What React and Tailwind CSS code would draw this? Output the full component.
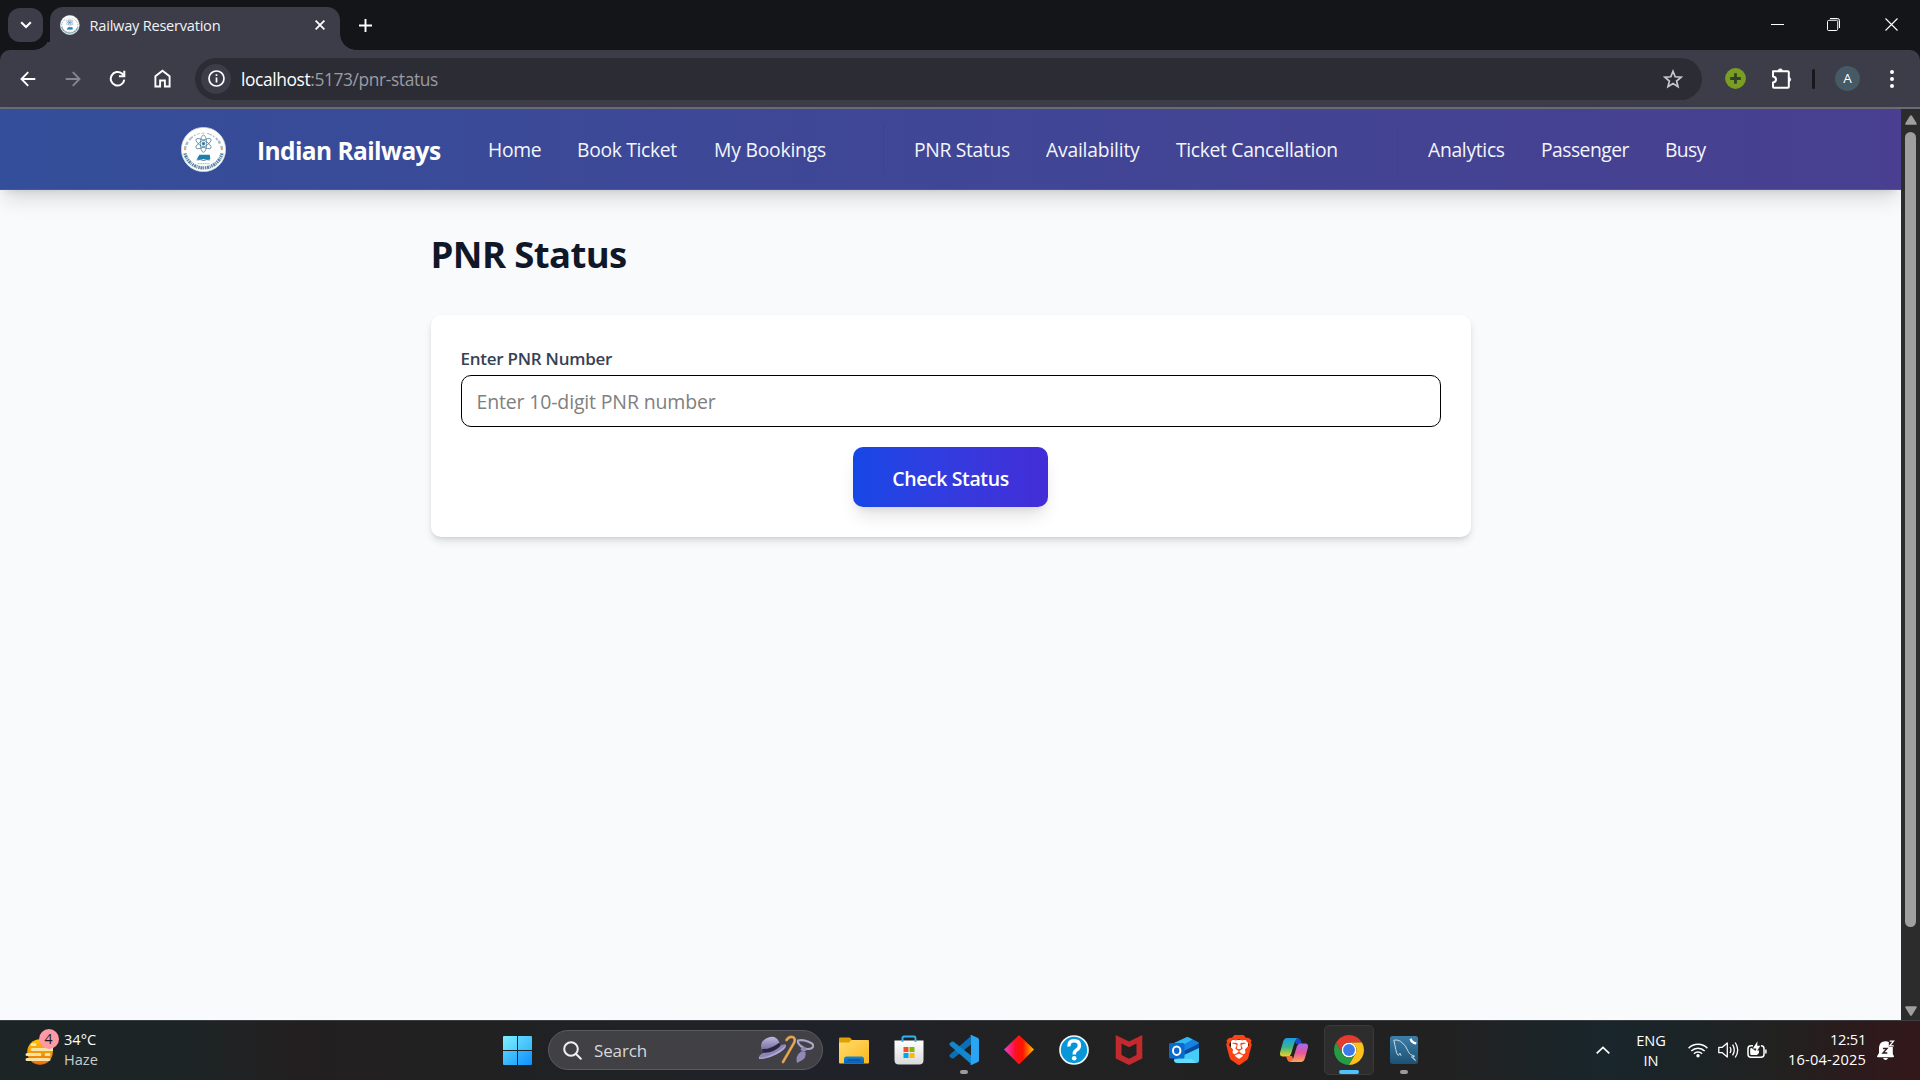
import React from "react";
import { SiBrave } from "react-icons/si";

const NAV = [
  [
    { label: "Home", box: "w-[54px]", tracking: "tracking-[-0.300px]" },
    { label: "Book Ticket", box: "w-[102px]", tracking: "tracking-[-0.320px]" },
    { label: "My Bookings", box: "w-[114px]", tracking: "tracking-[-0.200px]" },
  ],
  [
    { label: "PNR Status", box: "w-[97px]", tracking: "tracking-[-0.320px]" },
    { label: "Availability", box: "w-[95px]", tracking: "tracking-[-0.200px]" },
    { label: "Ticket Cancellation", box: "w-[166px]", tracking: "tracking-[-0.320px]" },
  ],
  [
    { label: "Analytics", box: "w-[78px]", tracking: "tracking-[-0.300px]" },
    { label: "Passenger", box: "w-[89px]", tracking: "tracking-[-0.520px]" },
    { label: "Busy", box: "w-[42px]", tracking: "tracking-[-0.650px]" },
  ],
];

function Crest({ className }) {
  return (
    <svg viewBox="0 0 46 46" className={className} fill="none">
      <circle cx="23" cy="23" r="22.6" fill="#fdfefe" stroke="#d3d8cf" strokeWidth="0.8" />
      <path d="M4 22a19.600 19.600 0 0 1 38 0" stroke="#6f8fa5" strokeWidth="2.600" strokeDasharray="2.600 1.200 3.500 2.400 5 1.400 1.600 1.800" opacity="0.600" />
      <path d="M4 27a19.600 19.600 0 0 0 38 0" stroke="#3f7397" strokeWidth="3.400" strokeDasharray="1.500 0.700 2.200 0.600 1 0.800" opacity="0.850" />
      <circle cx="23" cy="23" r="16.400" fill="#fff" />
      <g stroke="#3d7394" strokeWidth="0.700">
        <ellipse cx="23" cy="17" rx="3.200" ry="8.800" />
        <ellipse cx="23" cy="17" rx="3.200" ry="8.800" transform="rotate(60 23 17)" />
        <ellipse cx="23" cy="17" rx="3.200" ry="8.800" transform="rotate(-60 23 17)" />
        <circle cx="23" cy="17" r="1.400" fill="#3d7394" />
      </g>
      <path d="M18.800 28.300h10.600l.6 4.500H16.300z" fill="#1d7fb0" />
      <path d="M16 33.600q4-.8 7 .500 3-1.300 6.600-.5" stroke="#1f4f75" strokeWidth="0.900" />
      <path d="M17 37.500h12" stroke="#8ea6b5" strokeWidth="0.900" strokeDasharray="1.200 .6" />
      <circle cx="4.200" cy="22.600" r="1.200" fill="#f2a255" />
      <circle cx="41.800" cy="22.600" r="1.200" fill="#f2a255" />
    </svg>
  );
}

function TabStrip() {
  return (
    <div className="flex h-[50px] bg-[#141519]">
      <div className="flex h-[50px] w-[50px] shrink-0 flex-col">
        <div className="mt-2 ml-2 flex h-[34px] w-[35px] items-center justify-center rounded-[12px] bg-[#3c3d49]">
          <svg viewBox="0 0 12 8" className="h-2 w-3" fill="none" stroke="#fff" strokeWidth="2.100">
            <path d="M1.200 1.200 6 6l4.800-4.800" />
          </svg>
        </div>
        <div className="ml-auto h-2 w-4 shrink-0 bg-[radial-gradient(circle_at_0_-8px,transparent_15.5px,#3c3d49_16px)]" />
      </div>
      <div className="mt-[7px] flex h-[43px] w-[290px] shrink-0 items-center rounded-t-[13px] bg-[#3c3d49] pb-[7px] pl-[10px]">
        <Crest className="size-5" />
        <span className="ml-[10px] w-[230px] text-[14.600px] leading-5 tracking-[-0.240px] text-[#f2f2f5]">Railway Reservation</span>
        <svg viewBox="0 0 10 10" className="mr-[15px] size-[10px] shrink-0" stroke="#fff" strokeWidth="1.800">
          <path d="m.6.6 8.800 8.800M9.400.6.6 9.400" />
        </svg>
      </div>
      <div className="mt-auto h-4 w-4 shrink-0 bg-[radial-gradient(circle_at_100%_0,transparent_15.5px,#3c3d49_16px)]" />
      <svg viewBox="0 0 13 13" className="mt-[19px] ml-[3px] size-[13px] shrink-0" stroke="#fff" strokeWidth="1.900">
        <path d="M6.500 0v13M0 6.500h13" />
      </svg>
      <div className="ml-auto flex items-center pr-[22px] pb-[1px]">
        <div className="h-px w-[13px] bg-white" />
        <svg viewBox="0 0 13 13" className="ml-[43px] size-[13px]" fill="none" stroke="#fff" strokeWidth="1">
          <rect x=".5" y="2.500" width="10" height="10" rx="1" />
          <path d="M3 .5h7.500a2 2 0 0 1 2 2V10" />
          <path d="M2 2h9v9" stroke="#8d8d92" />
        </svg>
        <svg viewBox="0 0 13 13" className="ml-[45px] size-[13px]" stroke="#fff" strokeWidth="1.100">
          <path d="m.5.5 12 12M12.500.5l-12 12" />
        </svg>
      </div>
    </div>
  );
}

function Toolbar() {
  return (
    <div className="bg-[#141519]">
      <div className="flex h-[57px] items-center rounded-t-[10px] bg-[#3c3d49] pl-5">
        <svg viewBox="0 0 16 16" className="size-4" fill="none" stroke="#fff" strokeWidth="1.900">
          <path d="M15.300 8H1.800M8.200 1.200 1.500 8l6.700 6.800" />
        </svg>
        <svg viewBox="0 0 16 16" className="ml-[29px] size-4" fill="none" stroke="#85868f" strokeWidth="1.900">
          <path d="M.7 8h13.500M7.800 1.200 14.500 8l-6.700 6.800" />
        </svg>
        <svg viewBox="0 0 17 17" className="ml-[28px] size-[17px]" fill="none" stroke="#fff" strokeWidth="2">
          <path d="M15.300 9.600A6.800 6.800 0 1 1 13 3.600l2 1.900" />
          <path d="M15.300.8v5.400H9.900" />
        </svg>
        <svg viewBox="0 0 17 19" className="ml-[28px] h-[19px] w-[17px]" fill="none" stroke="#fff" strokeWidth="1.900">
          <path d="M1.400 17.500V7.300l7.100-5.600 7.100 5.600v10.200h-4.700v-6H6.100v6z" />
        </svg>
        <div className="ml-[24px] flex h-[42px] w-[1507px] items-center rounded-full bg-[#2c2c34] pl-[6px] pr-[19px]">
          <div className="flex size-[30px] items-center justify-center rounded-full bg-[#3c3d49]">
            <svg viewBox="0 0 17 17" className="size-[17px]" fill="none" stroke="#fff" strokeWidth="1.700">
              <circle cx="8.500" cy="8.500" r="7.500" />
              <path d="M8.500 7.500v5M8.500 4.200v1.900" />
            </svg>
          </div>
          <div className="ml-[10px] pt-px text-[17.400px] leading-6 text-[#9a9ba3]">
            <span className="tracking-[-0.400px] text-white">localhost</span>
            <span className="tracking-[-0.400px]">:5173/pnr-status</span>
          </div>
          <svg viewBox="0 0 20 20" className="ml-auto size-5" fill="none" stroke="#c8c8ce" strokeWidth="1.700">
            <path d="m10 2.300 2.200 5.500 5.900.4-4.500 3.800 1.400 5.700-5-3.100-5 3.100L6.400 12 1.900 8.200l5.900-.4z" />
          </svg>
        </div>
        <svg viewBox="0 0 21 21" className="ml-[23px] size-[21px]">
          <circle cx="10.500" cy="10.500" r="10.400" fill="#7a9e22" />
          <path d="M10.500 5.200v10.600M5.200 10.500h10.600" stroke="#33402a" strokeWidth="2.800" />
        </svg>
        <svg viewBox="0 0 21 21" className="ml-[25px] size-[21px]" fill="none" stroke="#fff" strokeWidth="2" strokeLinejoin="round">
          <path d="M2 3.200h14.800q1 0 1 1v14.600q0 1-1 1H3q-1 0-1-1v-4.200q3-.5 3-3t-3-3z" />
          <path d="M7 3a2.300 2.300 0 0 1 4.600 0zM18 9.300a2.300 2.300 0 0 1 0 4.500z" fill="#fff" strokeWidth="0.500" />
        </svg>
        <div className="ml-[20px] h-5 w-[3px] rounded-full bg-[#17181c]" />
        <div className="ml-[20px] flex size-[25px] items-center justify-center rounded-full bg-[#455a64] text-[13.500px] text-white">A</div>
        <div className="ml-[30px] flex flex-col gap-[3px]">
          <div className="size-1 rounded-full bg-white" />
          <div className="size-1 rounded-full bg-white" />
          <div className="size-1 rounded-full bg-white" />
        </div>
      </div>
      <div className="h-[2px] bg-[#6a6b74]" />
    </div>
  );
}

function Header() {
  return (
    <header className="flex h-[81px] items-center border-b border-[#5250a5] bg-linear-to-r from-[#334e9a] via-[#404696] to-[#483f90] pl-[181px] text-[#f4f5fb] shadow-[0_12px_20px_-4px_rgba(0,0,0,0.14),0_5px_8px_-5px_rgba(0,0,0,0.12)]">
      <Crest className="size-[45px]" />
      <span className="ml-[31px] w-[231px] pt-1 text-[24.500px] leading-[30px] font-bold tracking-[-0.580px] whitespace-nowrap text-white">Indian Railways</span>
      <nav className="flex items-center">
        {NAV.map((group, g) => (
          <div key={g} className={g === 0 ? "flex items-center gap-[35px]" : "ml-[55px] flex h-[50px] items-center gap-[35px] border-l border-[#4530d0] pl-[30px]"}>
            {group.map((item) => (
              <a key={item.label} className={`${item.box} ${item.tracking} pt-[2px] text-[19.300px] leading-[30px] font-medium whitespace-nowrap`}>{item.label}</a>
            ))}
          </div>
        ))}
      </nav>
    </header>
  );
}

function Page() {
  return (
    <div className="flex h-[911px]">
      <div className="w-[1901px] bg-[#f9fafc]">
        <Header />
        <main className="mx-auto w-[1040px] pt-[42px]">
          <h1 className="h-[83px] text-[36.500px] leading-[45px] font-bold tracking-[-0.600px] text-[#101828]">PNR Status</h1>
          <section className="flex h-[222px] flex-col rounded-[10px] bg-white px-[30px] pt-[30px] shadow-[0_5px_8px_-1px_rgba(0,0,0,0.12),0_2px_5px_-2px_rgba(0,0,0,0.12)]">
            <label className="h-[30px] text-[17px] leading-[27px] font-semibold tracking-[-0.250px] text-[#364153]">Enter PNR Number</label>
            <input
              placeholder="Enter 10-digit PNR number"
              className="h-[52px] w-full rounded-[10px] border border-black bg-white px-[15px] pt-px text-[19.500px] tracking-[-0.160px] outline-none placeholder:text-[#808080]"
            />
            <button className="mt-5 h-[60px] w-[195px] self-center rounded-[10px] bg-linear-to-r from-[#1447e6] to-[#432dd7] pt-[3px] text-[19.500px] font-semibold tracking-[-0.400px] text-white shadow-[0_12px_18px_-4px_rgba(0,0,0,0.12),0_5px_8px_-5px_rgba(0,0,0,0.12)]">
              Check Status
            </button>
          </section>
        </main>
      </div>
      <div className="flex w-[19px] flex-col items-center bg-[#2c2c2c] pt-[6px] pb-[4px]">
        <svg viewBox="0 0 12 10" className="h-[10px] w-3" fill="#9f9f9f">
          <path d="M5 .8q1-1 2 0l4.600 7.400q.6 1.600-.8 1.600H1.200q-1.400 0-.8-1.600z" />
        </svg>
        <div className="mt-[7px] h-[795px] w-[11px] rounded-full bg-[#9f9f9f]" />
        <svg viewBox="0 0 12 10" className="mt-auto h-[10px] w-3" fill="#9f9f9f">
          <path d="M5 9.200q1 1 2 0l4.600-7.400Q12.200.2 10.800.2H1.200Q-.2.2.4 1.800z" />
        </svg>
      </div>
    </div>
  );
}

function TaskSlot({ children, active, running }) {
  return (
    <div className="flex w-[55px] justify-center">
      <div className={active ? "flex h-[50px] w-[50px] flex-col items-center rounded-[5px] border border-[#3a3a3b] bg-[#2d2d2e]" : "flex h-[50px] w-[50px] flex-col items-center border border-transparent"}>
        <div className="mt-[9px] flex h-[30px] items-center">{children}</div>
        {active && <div className="mt-[5px] h-1 w-5 rounded-full bg-[#4cc2ff]" />}
        {running && <div className="mt-[5px] h-1 w-2 rounded-full bg-[#9a9a9a]" />}
      </div>
    </div>
  );
}

function SearchBox() {
  return (
    <div className="flex h-10 w-[275px] items-center rounded-full border border-[#5b5b5f] bg-[#414145] pl-[14px]">
      <svg viewBox="0 0 19 19" className="size-[19px]" fill="none" stroke="#f0f0f0" strokeWidth="2">
        <circle cx="8" cy="8" r="6.800" />
        <path d="m12.800 12.800 5 5" strokeLinecap="round" />
      </svg>
      <span className="ml-[12px] w-[164px] pt-px text-[17px] leading-6 tracking-[-0.140px] text-[#d8d8da]">Search</span>
      <svg viewBox="0 0 56 30" className="h-[30px] w-[56px] shrink-0">
        <defs>
          <linearGradient id="hat" x1="0" y1="0" x2="0" y2="1">
            <stop offset="0" stopColor="#bdb6e0" />
            <stop offset="1" stopColor="#6a6490" />
          </linearGradient>
        </defs>
        <path d="M1 23q-1-3 8-7l12-5q7-3 7-.5 0 4-10 9T1 24z" fill="#8d86b4" />
        <path d="M1 22.500q4 1 13-3T28 10q0 4-9 9T1 24z" fill="#b1aad4" />
        <path d="M4 16.500Q1 7 8 3.500q6-3 10-.5 3 2 4.500 7.500Q14 19 4 16.500" fill="url(#hat)" />
        <path d="M4 14q8 1 17.500-6.500l1 3.500Q14 19 4.500 17.500z" fill="#292644" />
        <path d="M25 27 36 8q2-5-1.500-6T28.500 5" stroke="#d69545" strokeWidth="2.700" fill="none" strokeLinecap="round" />
        <path d="M25 27 36 8q2-5-1.500-6T28.500 5" stroke="#f1bd72" strokeWidth="0.800" fill="none" strokeLinecap="round" />
        <path d="M46 13Q39 9 40 5.500q6-1.500 14 3 3 3-1 5-3 1-7 0" stroke="#aaa4cb" strokeWidth="2.200" fill="none" />
        <path d="m44 12 4 .5.500 3-3 1.500-3-2zM43 16.500l4.500.5q1 5-3 8l-5.500 3q-2-7 4-11.500" fill="#9089b8" />
      </svg>
    </div>
  );
}

function TaskbarApps() {
  return (
    <div className="flex items-center">
      <div className="grid size-[29px] grid-cols-2 gap-px overflow-hidden rounded-[1px]">
        <div className="bg-linear-to-br from-[#7eeeff] to-[#4fd0ff]" />
        <div className="bg-linear-to-br from-[#5fd6ff] to-[#36b9fb]" />
        <div className="bg-linear-to-br from-[#52ccff] to-[#22a7f7]" />
        <div className="bg-linear-to-br from-[#35b5fb] to-[#0c90ff]" />
      </div>
      <div className="mr-[3.500px] ml-4"><SearchBox /></div>
      <TaskSlot>
        <svg viewBox="0 0 30 27" className="h-[27px] w-[30px]">
          <defs>
            <linearGradient id="fold" x1="0" y1="0" x2="1" y2="1"><stop offset="0" stopColor="#ffdc6e" /><stop offset="1" stopColor="#fdb81c" /></linearGradient>
            <linearGradient id="foldb" x1="0" y1="0" x2="0" y2="1"><stop offset="0" stopColor="#1286d6" /><stop offset="1" stopColor="#0a5fb0" /></linearGradient>
          </defs>
          <path d="M0 1.500Q0 .5 1 .5h9q1 0 1.500.6L13 3v6H0z" fill="#e0a000" />
          <path d="M0 5.500h10L12.500 3H29q1 0 1 1v21.500q0 1-1 1H1q-1 0-1-1z" fill="url(#fold)" />
          <path d="M5 26.500V22q0-2.500 2.500-2.500h15Q25 19.500 25 22v4.500z" fill="url(#foldb)" />
          <path d="M8.500 23h13" stroke="#08487f" />
        </svg>
      </TaskSlot>
      <TaskSlot>
        <svg viewBox="0 0 30 30" className="size-[30px]">
          <defs><linearGradient id="bag" x1="0" y1="0" x2="0" y2="1"><stop offset="0" stopColor="#fff" /><stop offset="1" stopColor="#d9d9d9" /></linearGradient></defs>
          <path d="M.500 5.500h29V25q0 4.500-4.500 4.500H5Q.500 29.500.500 25z" fill="url(#bag)" />
          <path d="M8.500 7V3q0-1.500 1.500-1.500h10q1.500 0 1.500 1.500v4" fill="none" stroke="#2fb5ee" strokeWidth="1.900" />
          <path d="M9.500 12h5v5h-5z" fill="#f25022" /><path d="M15.500 12h5v5h-5z" fill="#7fba00" />
          <path d="M9.500 18h5v5h-5z" fill="#00a4ef" /><path d="M15.500 18h5v5h-5z" fill="#ffb900" />
        </svg>
      </TaskSlot>
      <TaskSlot running>
        <svg viewBox="0 0 30 30" className="size-[30px]">
          <path d="M22 1 1 19.500q-1.200 1.200 0 2.400l1.500 1.300q1 .8 2.200 0L22 9.500z" fill="#0a6fb5" />
          <path d="M22 29 1 10.500Q-.2 9.300 1 8.100l1.500-1.300q1-.8 2.200 0L22 20.500z" fill="#1287cf" />
          <path d="M21 .3 22.500 0 29 3q1 .5 1 1.800v20.400q0 1.300-1 1.800l-6.500 3-1.500-.3q1 0 1-2V2.300q0-2-1-2" fill="#2aa5f3" />
        </svg>
      </TaskSlot>
      <TaskSlot>
        <svg viewBox="0 0 30 30" className="size-[30px]">
          <defs><linearGradient id="dia"><stop offset="0" stopColor="#f03ce0" /><stop offset=".38" stopColor="#ff1022" /><stop offset=".62" stopColor="#ff1400" /><stop offset="1" stopColor="#ffc400" /></linearGradient></defs>
          <path d="M15 0 30 14.500 15 29.500 0 14.500z" fill="url(#dia)" />
        </svg>
      </TaskSlot>
      <TaskSlot>
        <svg viewBox="0 0 30 30" className="size-[30px]" fill="none">
          <circle cx="15" cy="15" r="14" fill="#0796d8" stroke="#f3f7fa" strokeWidth="1.700" />
          <path d="M10 11.500Q9.500 5.800 15 5.800q5.400 0 5.400 4.600 0 2.700-2.700 4.500-2.500 1.600-2.500 4.600" stroke="#fff" strokeWidth="3.500" />
          <circle cx="15.200" cy="23.300" r="2.300" fill="#fff" />
        </svg>
      </TaskSlot>
      <TaskSlot>
        <svg viewBox="0 0 28 30" className="h-[30px] w-[28px]">
          <path d="m.700 0 13.300 6.500L27.300 0v23.500L14 30 .700 23.500zM6.500 8.500v11.500L14 23.700l7.500-3.700V8.500L14 12.200z" fill="#c22a2e" fillRule="evenodd" />
        </svg>
      </TaskSlot>
      <TaskSlot>
        <svg viewBox="0 0 30 26" className="h-[26px] w-[30px]">
          <path d="M5 6 18 0l12 6v17q0 3-3 3H8q-3 0-3-3z" fill="#0f5fc0" />
          <path d="M5 6 17.500.3q1-.5 2 0L24 2.500 10 11z" fill="#31b8f4" />
          <path d="m10 10 14-7.500L29 5q1 .5 1 1.500L15 16z" fill="#1683e0" />
          <path d="m15 14 15-7.500V12l-13 7z" fill="#0a4a9e" />
          <path d="M30 11v12q0 3-3 3H9q-3 0-4-3l10-5z" fill="#45cdf5" />
          <path d="M5 22h18l4 4H8q-3 0-3-3z" fill="#7ee3fb" opacity=".6" />
          <rect x="0" y="6" width="15.500" height="15.500" rx="1.500" fill="#0a6ad0" />
          <ellipse cx="7.700" cy="13.700" rx="3.700" ry="4.200" fill="none" stroke="#fff" strokeWidth="2" />
        </svg>
      </TaskSlot>
      <TaskSlot>
        <div className="grid size-[30px] place-items-center">
          <div className="col-start-1 row-start-1 h-[20px] w-[17px] rounded-b-full bg-white" />
          <SiBrave className="col-start-1 row-start-1 size-[30px] text-[#fb4316]" />
        </div>
      </TaskSlot>
      <TaskSlot>
        <svg viewBox="0 0 28 26" className="h-[26px] w-[28px]">
          <defs>
            <linearGradient id="cpa" x1="0" y1="0" x2="0" y2="1"><stop offset="0" stopColor="#1a9be8" /><stop offset=".5" stopColor="#3bb58a" /><stop offset="1" stopColor="#f3d221" /></linearGradient>
            <linearGradient id="cpb" x1="0" y1="0" x2="0" y2="1"><stop offset="0" stopColor="#a06bf0" /><stop offset=".5" stopColor="#e8559c" /><stop offset="1" stopColor="#ffa552" /></linearGradient>
          </defs>
          <path d="M14 1h3.500q2.500 0 3.300 2.500L22 7h-6z" fill="#1a49c8" />
          <path d="M7 1h11q-2 0-3 3l-4 13q-.8 2.500-3.500 2.500h-5Q-1 19.500.3 14.500L3 5Q4.200 1 7 1" fill="url(#cpa)" />
          <path d="M14 25H10.500q-2.500 0-3.300-2.500L6 19h6z" fill="#f0703a" />
          <path d="M21 25H10q2 0 3-3l4-13q.8-2.500 3.500-2.500h5q3.500 0 2.200 5L25 21q-1.200 4-4 4" fill="url(#cpb)" />
        </svg>
      </TaskSlot>
      <TaskSlot active>
        <svg viewBox="0 0 48 48" className="size-[30px]">
          <circle cx="24" cy="24" r="12" fill="#fff" />
          <path d="M24 12h20.780A24 24 0 0 0 3.220 12L13.610 30A12 12 0 0 1 24 12" fill="#e33b2e" />
          <path d="M3.220 12 13.610 30A12 12 0 0 0 34.390 30L24 48A24 24 0 0 1 3.220 12" fill="#269a45" />
          <path d="M24 12h20.780A24 24 0 0 1 24 48L34.390 30A12 12 0 0 0 24 12" fill="#fcc21b" />
          <circle cx="24" cy="24" r="9.500" fill="#3b7cea" />
        </svg>
      </TaskSlot>
      <TaskSlot running>
        <svg viewBox="0 0 28 28" className="size-[28px]" fill="none">
          <defs><linearGradient id="sql" x1="0" y1="0" x2="0" y2="1"><stop offset="0" stopColor="#3d7ea8" /><stop offset="1" stopColor="#1d5173" /></linearGradient></defs>
          <rect width="28" height="28" rx="2.500" fill="url(#sql)" />
          <path d="M8.500 19.500 7 18Q5.500 13 5 9.500L3.800 4.300q3-1.200 6.700 1Q16 9 18.300 15.500q.8 2 2.300 3l4 1.700-2 .5 2.900 3.800M8.500 19.500l1.400-2.300 1.300 2.600M21 20.500l4.300 4" stroke="#d5e4ee" strokeWidth="0.900" />
          <path d="m20.500 2.800 1.200 2.400 2.200 1.600 2.400.6" stroke="#fff" strokeWidth="2.400" />
        </svg>
      </TaskSlot>
    </div>
  );
}

function Taskbar() {
  return (
    <footer className="flex h-[60px] items-center border-t border-[#3b3f41] bg-[linear-gradient(90deg,#1c2426_0,#1e2425_200px,#231f20_300px,#212122_480px,#1f2229_830px,#222123_1000px,#212121_1450px,#19262b_1600px,#1b2427_1680px,#222120_1780px,#2c1a1c_1860px,#33181b_1920px)] pb-px text-[14.600px] leading-5 text-white">
      <div className="flex w-[503px] items-center pl-[25px]">
        <div className="relative h-[38px] w-[39px]">
          <svg viewBox="0 0 28 27" className="mt-[8px] h-[27px] w-[28px]">
            <defs><linearGradient id="sun" x1="0" y1="0" x2="0" y2="1"><stop offset="0" stopColor="#ffc400" /><stop offset="1" stopColor="#ef6c0a" /></linearGradient></defs>
            <circle cx="15" cy="13" r="12.800" fill="url(#sun)" />
            <path d="M7 5.500h3M7 10.500h21M2 15.500h13M21 15.500h3M2 20.500h22" stroke="#f6e3a6" strokeWidth="3" strokeLinecap="round" />
          </svg>
          <span className="absolute -top-[2px] left-[13.500px] flex size-5 items-center justify-center rounded-full bg-[#ff99a4] text-[14px] text-[#1c1c1c]">4</span>
        </div>
        <div className="flex flex-col pb-[2px]">
          <span>34°C</span>
          <span className="text-[#c9cbcc]">Haze</span>
        </div>
      </div>
      <TaskbarApps />
      <div className="ml-auto flex items-center pr-[25px]">
        <svg viewBox="0 0 14 8" className="h-2 w-[14px]" fill="none" stroke="#fff" strokeWidth="1.700">
          <path d="m.7 7.300 6.300-6 6.300 6" />
        </svg>
        <div className="ml-[24px] flex w-[34px] flex-col items-center">
          <span>ENG</span>
          <span>IN</span>
        </div>
        <svg viewBox="0 0 20 16" className="ml-[20px] h-4 w-5" fill="none" stroke="#fff" strokeWidth="1.500">
          <path d="M.6 6.300a13.200 13.200 0 0 1 18.800 0M3.300 9a9.500 9.500 0 0 1 13.400 0M5.900 11.700a5.800 5.800 0 0 1 8.200 0" />
          <circle cx="10" cy="13.700" r="1.700" fill="#fff" stroke="none" />
        </svg>
        <svg viewBox="0 0 21 18" className="ml-[10px] h-[18px] w-[21px]" fill="none" stroke="#fff" strokeWidth="1.300">
          <path d="M.8 6.300h3.500L9.300 2v14l-5-4.300H.8zM12 6q1.800 3 0 6M14.600 3.700q3.400 5.300 0 10.600M17.200 1.500q5 7.500 0 15" strokeLinejoin="round" />
        </svg>
        <svg viewBox="0 0 20 18" className="ml-[8px] h-[18px] w-5" fill="none" stroke="#fff" strokeWidth="1.500">
          <path d="M6 4.700H4Q1 4.700 1 7.700v5.500q0 3 3 3h10q3 0 3-3V7.700q0-3-3-3" />
          <path d="M18.900 8.500v4" />
          <path d="M3.200 8Q3.200 7 4.500 7L8 9.500h4v2.500l-2 2H4.500q-1.300 0-1.300-1.300z" fill="#fff" stroke="none" />
          <path d="M10.500.3 5.800 7.600h3.500l-.6 4.200 4.700-7h-3.200z" fill="#fff" stroke="none" />
        </svg>
        <div className="ml-[11px] flex w-[88px] flex-col items-end pb-[2px]">
          <span className="tracking-[-0.240px]">12:51</span>
          <span className="tracking-[0.180px]">16-04-2025</span>
        </div>
        <svg viewBox="0 0 18 20" className="ml-[11px] h-5 w-[18px]" fill="#fff">
          <path d="M8.500 1.200q2 0 3.300.8v5h4v7l1.200 2.300q0 1-1 1H1q-1 0-1-1L2 13V7.500Q2.500 1.200 8.500 1.200M6 18h5q-.8 2-2.500 2T6 18" />
          <path d="M6 8.500h4l-4 4.500h4.300" fill="none" stroke="#2b1b1d" strokeWidth="1.400" />
          <path d="M12.700 1.200h3.800l-3.800 4.600h4" fill="none" stroke="#fff" strokeWidth="1.300" />
        </svg>
      </div>
    </footer>
  );
}

export default function App() {
  return (
    <div className="flex h-[1080px] w-[1920px] flex-col overflow-hidden font-['Open_Sans','Noto_Sans',sans-serif]">
      <TabStrip />
      <Toolbar />
      <Page />
      <Taskbar />
    </div>
  );
}
